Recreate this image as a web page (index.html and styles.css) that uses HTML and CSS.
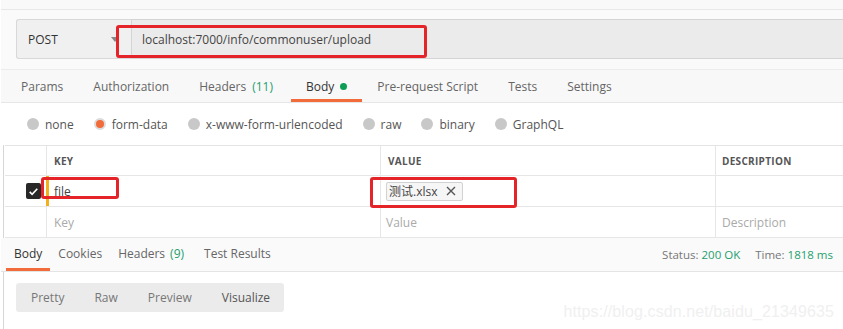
FILE: index.html
```html
<!DOCTYPE html>
<html lang="en">
<head>
    <meta charset="UTF-8">
    <meta name="viewport" content="width=device-width, initial-scale=1.0">
    <title>Postman - upload</title>
    <link rel="stylesheet" href="styles.css">
</head>
<body>
    <div class="app">
        <div class="topbar"></div>

        <div class="request-row">
            <div class="method">
                <span>POST</span>
                <span class="caret"></span>
            </div>
            <div class="url">localhost:7000/info/commonuser/upload</div>
        </div>

        <div class="tabs">
            <div class="tab">Params</div>
            <div class="tab">Authorization</div>
            <div class="tab">Headers <span class="count">(11)</span></div>
            <div class="tab active">Body <span class="dot"></span></div>
            <div class="tab">Pre-request Script</div>
            <div class="tab">Tests</div>
            <div class="tab">Settings</div>
        </div>

        <div class="body-types">
            <label class="radio"><span class="circle"></span>none</label>
            <label class="radio checked"><span class="circle"></span>form-data</label>
            <label class="radio"><span class="circle"></span>x-www-form-urlencoded</label>
            <label class="radio"><span class="circle"></span>raw</label>
            <label class="radio"><span class="circle"></span>binary</label>
            <label class="radio"><span class="circle"></span>GraphQL</label>
        </div>

        <div class="kv-table">
            <div class="kv-row head">
                <div class="cell check"></div>
                <div class="cell key">KEY</div>
                <div class="cell value">VALUE</div>
                <div class="cell desc">DESCRIPTION</div>
            </div>
            <div class="kv-row">
                <div class="cell check">
                    <span class="checkbox">
                        <svg viewBox="0 0 16 16" width="11" height="11"><path d="M2.5 8.5l3.5 3.5 7.5-8" fill="none" stroke="#fff" stroke-width="2.4"/></svg>
                    </span>
                </div>
                <div class="cell key editing">file</div>
                <div class="cell value">
                    <span class="file-tag">测试.xlsx
                        <svg class="remove" viewBox="0 0 10 10" width="10" height="10"><path d="M1 1l8 8M9 1l-8 8" stroke="#555" stroke-width="1.4"/></svg>
                    </span>
                </div>
                <div class="cell desc"></div>
            </div>
            <div class="kv-row">
                <div class="cell check"></div>
                <div class="cell key placeholder">Key</div>
                <div class="cell value placeholder">Value</div>
                <div class="cell desc placeholder">Description</div>
            </div>
        </div>

        <div class="response-bar">
            <div class="res-tabs">
                <div class="res-tab active">Body</div>
                <div class="res-tab">Cookies</div>
                <div class="res-tab">Headers <span class="count">(9)</span></div>
                <div class="res-tab">Test Results</div>
            </div>
            <div class="res-meta">
                <span>Status: <span class="count">200 OK</span></span>
                <span>Time: <span class="count">1818 ms</span></span>
            </div>
        </div>

        <div class="views">
            <div class="view">Pretty</div>
            <div class="view">Raw</div>
            <div class="view">Preview</div>
            <div class="view dark">Visualize</div>
        </div>

        <!-- annotations drawn over the screenshot -->
        <div class="mark mark-url"></div>
        <div class="mark mark-key"></div>
        <div class="mark mark-value"></div>
        <div class="watermark">https://blog.csdn.net/baidu_21349635</div>
    </div>
</body>
</html>
```

FILE: styles.css
```css
* {
    margin: 0;
    padding: 0;
    box-sizing: border-box;
}

body {
    font-family: 'Open Sans', 'Noto Sans CJK SC', sans-serif;
    font-size: 12px;
    color: #505050;
    background: #fff;
}

.app {
    position: relative;
    width: 843px;
    height: 329px;
    overflow: hidden;
    border-left: 1px solid #fff;
    background: linear-gradient(90deg, #fff 0, #fff 2px, #d6d6d6 2px, #d6d6d6 3px, #fff 3px);
}

.topbar {
    height: 10px;
    background: #f9f9f9;
    border-bottom: 1px solid #e8e8e8;
}

.request-row {
    display: flex;
    padding: 9px 0 10px 15px;
    background: #fafafa;
}

.method {
    width: 115px;
    height: 40px;
    display: flex;
    align-items: center;
    justify-content: space-between;
    padding: 0 12px 0 11px;
    background: #f0f0f0;
    border: 1px solid #d8d8d8;
    border-right: none;
    border-radius: 3px 0 0 3px;
    color: #333;
}

.caret {
    width: 0;
    height: 0;
    border-left: 4px solid transparent;
    border-right: 4px solid transparent;
    border-top: 5px solid #888;
}

.url {
    flex: 1;
    height: 40px;
    display: flex;
    align-items: center;
    padding-left: 10px;
    background: #ebebeb;
    border: 1px solid #d4d4d4;
    border-right: none;
    color: #444;
}

.tabs {
    display: flex;
    height: 34px;
    padding-left: 5px;
    background: #f8f8f8;
    border-top: 1px solid #ececec;
    border-bottom: 1px solid #e6e6e6;
}

.tab {
    display: flex;
    align-items: center;
    gap: 6px;
    padding: 3px 15px 0;
    color: #666;
    border-bottom: 3px solid transparent;
}

.tab.active {
    color: #333;
    border-bottom-color: #f26b3a;
    margin-left: 3px;
}

.count {
    color: #1f9e6e;
}

.dot {
    width: 7px;
    height: 7px;
    border-radius: 50%;
    background: #0d9e54;
}

.body-types {
    display: flex;
    align-items: center;
    gap: 20px;
    height: 42px;
    padding-left: 26px;
    background: #fff;
}

.radio {
    display: flex;
    align-items: center;
    gap: 6px;
    color: #555;
}

.circle {
    width: 12px;
    height: 12px;
    border-radius: 50%;
    background: #c8c8c8;
}

.radio.checked .circle {
    background: #f26b3a;
    border: 2px solid #dcdcdc;
}

.kv-table {
    margin-left: 4px;
    border-top: 1px solid #e4e4e4;
}

.kv-row {
    display: flex;
    height: 31px;
    border-bottom: 1px solid #e6e6e6;
}

.kv-row.head {
    height: 30px;
    font-size: 10px;
    font-weight: 700;
    color: #555;
    letter-spacing: 0.3px;
}

.cell {
    display: flex;
    align-items: center;
    padding-left: 7px;
}

.cell.check {
    width: 41px;
    padding-left: 21px;
}

.cell.key {
    width: 334px;
    border-left: 1px solid #e6e6e6;
}

.cell.value {
    width: 335px;
    border-left: 1px solid #e6e6e6;
    padding-left: 5px;
}

.cell.desc {
    flex: 1;
    border-left: 1px solid #e6e6e6;
    padding-left: 6px;
}

.kv-row.head .cell.value {
    padding-left: 7px;
}

.cell.editing {
    border-left: 3px solid #f2b01e;
    padding-left: 5px;
    color: #444;
}

.placeholder {
    color: #aaa;
}

.checkbox {
    width: 15px;
    height: 16px;
    border-radius: 2px;
    background: #282828;
    display: flex;
    align-items: center;
    justify-content: center;
}

.file-tag {
    display: inline-flex;
    align-items: center;
    gap: 9px;
    height: 19px;
    padding: 0 6px 0 2px;
    background: #f6f6f6;
    border: 1px solid #d2d2d2;
    border-radius: 2px;
    color: #444;
}

.response-bar {
    display: flex;
    align-items: stretch;
    justify-content: space-between;
    height: 34px;
    background: #fafafa;
    border-bottom: 1px solid #e4e4e4;
}

.res-tabs {
    display: flex;
    padding-left: 5px;
}

.res-tab {
    display: flex;
    align-items: center;
    gap: 5px;
    padding: 1px 8px 0;
    color: #666;
    border-bottom: 3px solid transparent;
}

.res-tab:last-child {
    margin-left: 4px;
}

.res-tab.active {
    color: #333;
    border-bottom-color: #f26b3a;
}

.res-meta {
    display: flex;
    align-items: center;
    gap: 15px;
    padding-right: 10px;
    font-size: 11.5px;
    color: #777;
}

.views {
    display: flex;
    width: 268px;
    height: 29px;
    margin: 11px 0 0 15px;
    background: #ebebeb;
    border-radius: 3px;
}

.view {
    display: flex;
    align-items: center;
    padding: 0 15px;
    color: #777;
}

.view.dark {
    color: #555;
}

.mark {
    position: absolute;
    border: 3px solid #e5242a;
    border-radius: 3px;
}

.mark-url {
    left: 115px;
    top: 25px;
    width: 311px;
    height: 33px;
}

.mark-key {
    left: 40px;
    top: 177px;
    width: 78px;
    height: 22px;
}

.mark-value {
    left: 369px;
    top: 177px;
    width: 147px;
    height: 31px;
}

.watermark {
    position: absolute;
    right: 9px;
    top: 303px;
    font-family: 'Liberation Sans', Arial, sans-serif;
    font-size: 16px;
    color: #f0f0f0;
    letter-spacing: 0.1px;
}
```
